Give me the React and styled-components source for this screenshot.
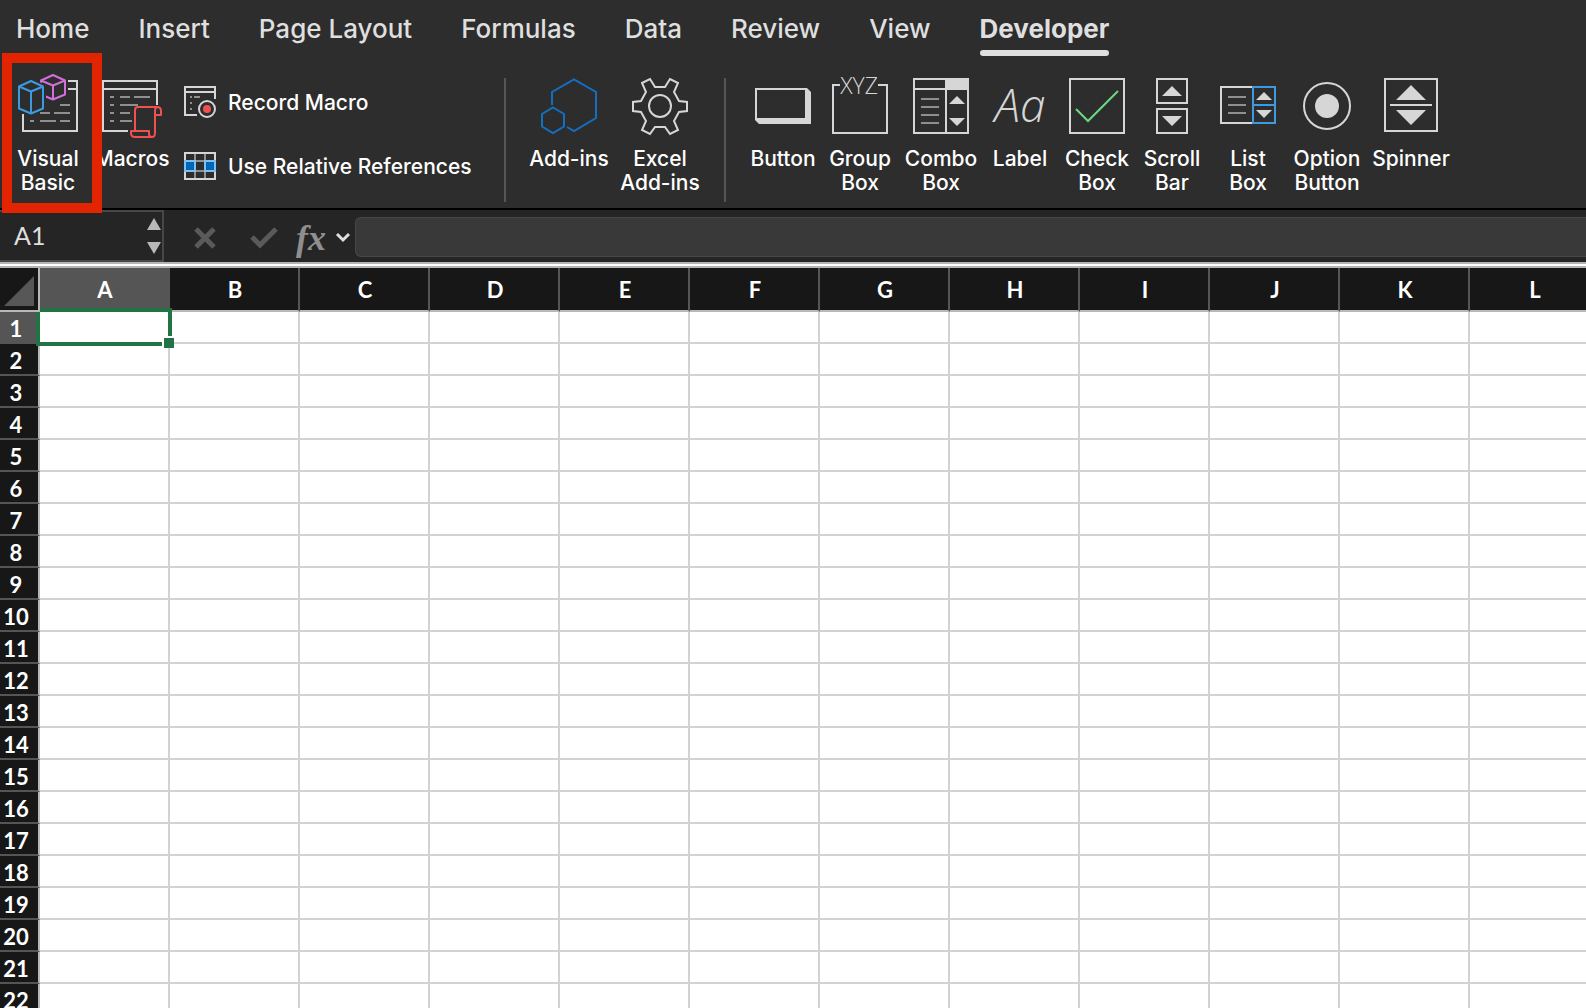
import React, { useState } from "react";
import styled, { createGlobalStyle } from "styled-components";

const GlobalStyle = createGlobalStyle`
  *, *::before, *::after { box-sizing: border-box; }
  body { margin: 0; background: #fff; overflow: hidden; }
  button, input { font: inherit; color: inherit; border: 0; background: none; padding: 0; margin: 0; }
  svg { display: block; overflow: visible; }
`;

const UI_FONT = `Inter, "Liberation Sans", sans-serif`;
const SHEET_FONT = `Lato, "Open Sans", sans-serif`;

const Window = styled.div`
  display: flex;
  flex-direction: column;
  height: 100vh;
  overflow: hidden;
  font-family: ${UI_FONT};
  color: #fff;
`;

const TabBar = styled.nav`
  display: flex;
  gap: 49px;
  height: 62px;
  flex: none;
  padding: 11px 16px 6px;
  background: #2d2d2d;
`;

const Tab = styled.button`
  display: flex;
  flex-direction: column;
  align-items: stretch;
  justify-content: space-between;
  font-size: 26px;
  line-height: 36px;
  font-weight: ${(p) => (p.$active ? 700 : 500)};
  color: #dfdfdf;
  white-space: nowrap;
`;

const TabUnderline = styled.span`
  height: 6px;
  border-radius: 3px;
  background: #dfdfdf;
`;

const Ribbon = styled.div`
  display: flex;
  flex: none;
  height: 148px;
  padding: 12px 6px 4px;
  background: #2d2d2d;
  border-bottom: 2px solid #000;
`;

const Group = styled.div`
  display: flex;
  flex: none;
  width: ${(p) => (p.$width ? `${p.$width}px` : "auto")};
  padding-left: ${(p) => (p.$inset ? "2px" : 0)};
`;

const Separator = styled.div`
  flex: none;
  width: 2px;
  margin: 4px 18px 2px;
  background: #555;
`;

const Tool = styled.button`
  position: relative;
  display: flex;
  flex-direction: column;
  align-items: center;
  flex: none;
  gap: 9px;
  width: ${(p) => p.$width}px;
  font-size: 21px;
  line-height: 24px;
  font-weight: 500;
  white-space: pre-line;
  text-align: center;
`;

const ToolIcon = styled.span`
  display: flex;
  align-items: center;
  justify-content: center;
  height: 64px;
`;

const Highlight = styled.span`
  position: absolute;
  z-index: 1;
  top: -21px;
  left: -4px;
  width: 100px;
  height: 160px;
  border: 10px solid #e32400;
  pointer-events: none;
`;

const ToolStack = styled.div`
  display: flex;
  flex-direction: column;
  gap: 32px;
  padding: 12px 0 0 10px;
`;

const InlineTool = styled.button`
  display: flex;
  align-items: center;
  gap: 12px;
  height: 32px;
  font-size: 21px;
  line-height: 24px;
  font-weight: 500;
  white-space: nowrap;
`;

const InlineLabel = styled.span`
  padding-top: 2px;
`;

const FormulaBar = styled.div`
  display: flex;
  align-items: center;
  flex: none;
  height: 52px;
  background: #252525;
`;

const NameBox = styled.div`
  display: flex;
  align-items: center;
  align-self: stretch;
  width: 164px;
  padding: 0 1px 0 14px;
  border: 2px solid #474747;
  border-left: 0;
`;

const NameInput = styled.input`
  flex: 1;
  min-width: 0;
  outline: 0;
  font-family: ${SHEET_FONT};
  font-size: 25px;
  line-height: 32px;
  padding-bottom: 2px;
  color: #dfdfdf;
`;

const Actions = styled.div`
  display: flex;
  align-items: center;
  gap: 35px;
  padding: 4px 0 0 31px;
  color: #5a5a5a;
`;

const FunctionButton = styled.button`
  display: flex;
  align-items: center;
  gap: 10px;
  margin-left: 18px;
  padding-top: 4px;
  font-family: "Liberation Serif", serif;
  font-size: 36px;
  line-height: 40px;
  font-style: italic;
  font-weight: 700;
  color: #8f8f8f;
`;

const FormulaInput = styled.input`
  flex: 1;
  min-width: 0;
  height: 40px;
  margin: 2px 0 0 5px;
  padding: 0 12px;
  outline: 0;
  font-family: ${SHEET_FONT};
  font-size: 22px;
  background: #393939;
  border: 1px solid #484848;
  border-right: 0;
  border-radius: 6px 0 0 6px;
`;

const Divider = styled.div`
  flex: none;
  height: 6px;
  background: #fff;
  border: solid #b4b4b4;
  border-width: 2px 0;
`;

const SheetArea = styled.main`
  flex: 1;
  min-height: 0;
  overflow: hidden;
  background: #fff;
`;

const Sheet = styled.table`
  table-layout: fixed;
  width: 1600px;
  border-spacing: 0;
  font-family: ${SHEET_FONT};
  font-size: 22px;
  line-height: 26px;
`;

const RowHeadCol = styled.col`
  width: 40px;
`;

const Corner = styled.td`
  position: relative;
  z-index: 2;
  height: 44px;
  padding: 0 4px 4px;
  vertical-align: bottom;
  background: #171717;
  border: solid #b8b8b8;
  border-width: 0 2px 2px 0;
`;

const ColumnHead = styled.th`
  height: 44px;
  padding: 2px 0 0 2px;
  font-weight: 700;
  background: ${(p) => (p.$selected ? "#555" : "#171717")};
  border: solid;
  border-width: 0 2px 2px 0;
  border-color: #b8b8b8 #555 #b8b8b8 #555;
`;

const RowHead = styled.th`
  height: 32px;
  padding: 3px 6px 0 0;
  font-weight: 700;
  background: ${(p) => (p.$selected ? "#555" : "#171717")};
  border: solid;
  border-width: 0 2px 2px 0;
  border-color: #555 #b8b8b8 #555 #555;
`;

const Cell = styled.td`
  position: relative;
  height: 32px;
  padding: 0;
  border: solid #d2d2d2;
  border-width: 0 2px 2px 0;
`;

const Selection = styled.div`
  position: absolute;
  z-index: 1;
  inset: -4px;
  border: 4px solid #217346;
`;

const FillHandle = styled.div`
  position: absolute;
  right: -6px;
  bottom: -6px;
  width: 12px;
  height: 12px;
  background: #217346;
  border: solid #fff;
  border-width: 2px 0 0 2px;
`;

const LINE = "#d6d6d6";
const BG = "#2d2d2d";

const VisualBasicIcon = () => (
  <svg width="60" height="64" viewBox="0 0 60 64" fill="none" strokeWidth="2">
    <path d="M50 7h9v50H5V40M50 15h9" stroke={LINE} />
    <path d="M42 31h10M22 39h10m4 0h16M12 47h4m6 0h16m4 0h10" stroke="#8f8f8f" />
    <g stroke="#d36fdb" strokeLinejoin="round">
      <path d="M35 1l12 5.500v14L35 25.500 23 20.500v-14z" fill={BG} />
      <path d="M23 6.500L35 11.500l12-5M35 11.500v14" />
    </g>
    <path d="M0 11L13 4l15 7v24L13 42 0 36z" fill={BG} />
    <g stroke="#3c9be0" strokeLinejoin="round">
      <path d="M13 7l12 5.500v22L13 39.500 1 34.500v-22z" fill={BG} />
      <path d="M1 12.500l12 5 12-5M13 17.500v22" />
    </g>
  </svg>
);

const MacrosIcon = () => (
  <svg width="60" height="64" viewBox="0 0 60 64" fill="none" strokeWidth="2">
    <path d="M55 31V7H1v50h25M1 15h54" stroke={LINE} />
    <path d="M8 23h4m6 0h10m4 0h16M8 31h4m6 0h18M8 39h4m6 0h10M8 47h4m6 0h12" stroke="#8f8f8f" />
    <g stroke="#f0504f" strokeLinejoin="round">
      <path d="M33 57V37q0-4 4-4h18q4 0 4 4v4h-6v17q0 5-4 5z" fill={BG} stroke="none" />
      <path d="M33 57V36q0-3 3-3h19q4 0 4 4v4h-6V37q0-4 3-4M53 41v18q0 4-3 4H33q-4 0-4-4v-2h18v3q0 3 3 3" />
    </g>
  </svg>
);

const RecordIcon = () => (
  <svg width="32" height="32" viewBox="0 0 32 32" fill="none" strokeWidth="2">
    <path d="M31 13V1H1v28h12M1 6h30" stroke={LINE} />
    <path d="M6 11h2m2 0h6M6 17h2M6 23h2" stroke="#8f8f8f" />
    <circle cx="23" cy="23" r="8" stroke={LINE} />
    <circle cx="23" cy="23" r="4" fill="#f0504f" />
  </svg>
);

const RelativeIcon = () => (
  <svg width="32" height="28" viewBox="0 0 32 28" fill="none" strokeWidth="2">
    <path d="M11 1v26M21 1v26" stroke="#8f8f8f" />
    <path d="M1 1h30v26H1z" stroke={LINE} />
    <path d="M12 9h8M12 19h8" stroke="#8f8f8f" />
    <path d="M1 9h10v10H1zM21 9h10v10H21z" fill="#0067b8" stroke="#83beec" />
  </svg>
);

const AddinsIcon = () => (
  <svg width="56" height="56" viewBox="0 0 56 56" fill="none" stroke="#156fc0" strokeWidth="2">
    <path d="M11 27V14L33 1.500 55 14v26L33 53 26 49" />
    <path d="M12 29.500L23 36v12.500L12 55 1 48.500V36z" />
  </svg>
);

const GearIcon = () => (
  <svg width="56" height="56" viewBox="0 0 56 56" fill="none" stroke={LINE} strokeWidth="2">
    <path d="M10 5L18 1l5 8h10l5-8 8 4-4 9 5 9 8 1v9l-8 1-5 9 4 9-8 4-5-7H23l-5 7-8-4 4-9-5-9-8-1v-9l8-1 5-9z" />
    <circle cx="28" cy="28" r="11" />
  </svg>
);

const ButtonIcon = () => (
  <svg width="56" height="36" viewBox="0 0 56 36" fill={LINE}>
    <path fillRule="evenodd" d="M0 0h52l4 4v32H4l-4-4zM2 2v28h48V2z" />
  </svg>
);

const XyzText = styled.text`
  font-family: "Open Sans", sans-serif;
  font-size: 23px;
  font-weight: 300;
`;

const GroupBoxIcon = () => (
  <svg width="56" height="56" viewBox="0 0 56 56" fill="none">
    <path d="M8 7H1v48h54V7h-9" stroke={LINE} strokeWidth="2" />
    <XyzText x="27" y="16" textAnchor="middle" fill={LINE}>XYZ</XyzText>
  </svg>
);

const ComboBoxIcon = () => (
  <svg width="56" height="56" viewBox="0 0 56 56" fill="none" strokeWidth="2">
    <path d="M1 1h54v54H1zM1 11h54M33 1v54" stroke={LINE} />
    <path d="M32 0h24v12H32zM36 26l8-8 8 8zM36 40h16l-8 8z" fill={LINE} />
    <path d="M8 21h18M8 29h18M8 37h18M8 45h18" stroke="#8f8f8f" />
  </svg>
);

const LabelText = styled.text`
  font-family: "Open Sans", sans-serif;
  font-size: 46px;
  font-weight: 300;
  font-style: italic;
`;

const LabelIcon = () => (
  <svg width="56" height="56" viewBox="0 0 56 56">
    <LabelText x="28" y="44" textAnchor="middle" fill={LINE}>Aa</LabelText>
  </svg>
);

const CheckBoxIcon = () => (
  <svg width="56" height="56" viewBox="0 0 56 56" fill="none" strokeWidth="2">
    <path d="M1 1h54v54H1z" stroke={LINE} />
    <path d="M7 31l12 12 30-30" stroke="#6bd983" />
  </svg>
);

const ScrollBarIcon = () => (
  <svg width="32" height="56" viewBox="0 0 32 56" fill="none">
    <path d="M1 1h30v24H1zM1 31h30v24H1z" stroke={LINE} strokeWidth="2" />
    <path d="M6 18L16 8l10 10zM6 38h20L16 48z" fill={LINE} />
  </svg>
);

const ListBoxIcon = () => (
  <svg width="56" height="40" viewBox="0 0 56 40" fill="none" strokeWidth="2">
    <path d="M33 1H1v36h32" stroke={LINE} />
    <path d="M33 1h22v36H33zM33 19h22" stroke="#3c9be0" />
    <path d="M36 14l8-8 8 8zM36 24h16l-8 8z" fill={LINE} />
    <path d="M8 11h18M8 19h18M8 27h18" stroke="#8f8f8f" />
  </svg>
);

const OptionIcon = () => (
  <svg width="48" height="48" viewBox="0 0 48 48" fill="none">
    <circle cx="24" cy="24" r="23" stroke={LINE} strokeWidth="2" />
    <circle cx="24" cy="24" r="12" fill={LINE} />
  </svg>
);

const SpinnerIcon = () => (
  <svg width="54" height="56" viewBox="0 0 54 56" fill="none">
    <path d="M1 1h52v52H1zM6 27h42" stroke={LINE} strokeWidth="2" />
    <path d="M12 22L27 7l15 15zM12 32h30L27 47z" fill={LINE} />
  </svg>
);

const StepperIcon = () => (
  <svg width="14" height="36" viewBox="0 0 14 36" fill="#b8b8b8">
    <path d="M0 12L7 0l7 12zM0 24h14L7 36z" />
  </svg>
);

const CancelIcon = () => (
  <svg width="20" height="20" viewBox="0 0 20 20" stroke="currentColor" strokeWidth="5">
    <path d="M1 1l18 18M19 1L1 19" />
  </svg>
);

const EnterIcon = () => (
  <svg width="28" height="20" viewBox="0 0 28 20" fill="none" stroke="currentColor" strokeWidth="5">
    <path d="M2 9l8 8L26 1" />
  </svg>
);

const ChevronIcon = () => (
  <svg width="14" height="10" viewBox="0 0 14 10" fill="none" stroke="#dfdfdf" strokeWidth="3">
    <path d="M1 1l6 6 6-6" />
  </svg>
);

const TABS = ["Home", "Insert", "Page Layout", "Formulas", "Data", "Review", "View", "Developer"];

const ADDINS = [
  { label: "Add-ins", icon: AddinsIcon, width: 90 },
  { label: "Excel\nAdd-ins", icon: GearIcon, width: 92 },
];

const CONTROLS = [
  { label: "Button", icon: ButtonIcon, width: 74 },
  { label: "Group\nBox", icon: GroupBoxIcon, width: 80 },
  { label: "Combo\nBox", icon: ComboBoxIcon, width: 82 },
  { label: "Label", icon: LabelIcon, width: 76 },
  { label: "Check\nBox", icon: CheckBoxIcon, width: 78 },
  { label: "Scroll\nBar", icon: ScrollBarIcon, width: 72 },
  { label: "List\nBox", icon: ListBoxIcon, width: 80 },
  { label: "Option\nButton", icon: OptionIcon, width: 78 },
  { label: "Spinner", icon: SpinnerIcon, width: 90 },
];

const COLUMNS = "ABCDEFGHIJKL".split("");
const ROWS = Array.from({ length: 22 }, (_, i) => i + 1);

function RibbonTool({ label, icon: Icon, width, children }) {
  return (
    <Tool $width={width}>
      <ToolIcon><Icon /></ToolIcon>
      <span>{label}</span>
      {children}
    </Tool>
  );
}

export default function App() {
  const [tab, setTab] = useState("Developer");
  const [name, setName] = useState("A1");
  const [formula, setFormula] = useState("");

  return (
    <Window>
      <GlobalStyle />
      <TabBar>
        {TABS.map((t) => (
          <Tab key={t} $active={t === tab} onClick={() => setTab(t)}>
            <span>{t}</span>
            {t === tab && <TabUnderline />}
          </Tab>
        ))}
      </TabBar>
      <Ribbon>
        <Group $width={480}>
          <RibbonTool label={"Visual\nBasic"} icon={VisualBasicIcon} width={84}>
            <Highlight />
          </RibbonTool>
          <RibbonTool label="Macros" icon={MacrosIcon} width={84} />
          <ToolStack>
            <InlineTool><RecordIcon /><InlineLabel>Record Macro</InlineLabel></InlineTool>
            <InlineTool><RelativeIcon /><InlineLabel>Use Relative References</InlineLabel></InlineTool>
          </ToolStack>
        </Group>
        <Separator />
        <Group>{ADDINS.map((t) => <RibbonTool key={t.label} {...t} />)}</Group>
        <Separator />
        <Group $inset>{CONTROLS.map((t) => <RibbonTool key={t.label} {...t} />)}</Group>
      </Ribbon>
      <FormulaBar>
        <NameBox>
          <NameInput aria-label="Name box" value={name} onChange={(e) => setName(e.target.value)} />
          <button aria-label="Step through names"><StepperIcon /></button>
        </NameBox>
        <Actions>
          <button aria-label="Cancel"><CancelIcon /></button>
          <button aria-label="Enter"><EnterIcon /></button>
        </Actions>
        <FunctionButton aria-label="Insert function"><span>fx</span><ChevronIcon /></FunctionButton>
        <FormulaInput aria-label="Formula" value={formula} onChange={(e) => setFormula(e.target.value)} />
      </FormulaBar>
      <Divider />
      <SheetArea>
        <Sheet>
          <colgroup>
            <RowHeadCol />
            {COLUMNS.map((c) => <col key={c} />)}
          </colgroup>
          <thead>
            <tr>
              <Corner>
                <svg width="30" height="30" viewBox="0 0 30 30"><path d="M30 0v30H0z" fill="#575757" /></svg>
              </Corner>
              {COLUMNS.map((c) => <ColumnHead key={c} scope="col" $selected={c === "A"}>{c}</ColumnHead>)}
            </tr>
          </thead>
          <tbody>
            {ROWS.map((r) => (
              <tr key={r}>
                <RowHead scope="row" $selected={r === 1}>{r}</RowHead>
                {COLUMNS.map((c) => (
                  <Cell key={c}>
                    {r === 1 && c === "A" && <Selection><FillHandle /></Selection>}
                  </Cell>
                ))}
              </tr>
            ))}
          </tbody>
        </Sheet>
      </SheetArea>
    </Window>
  );
}
